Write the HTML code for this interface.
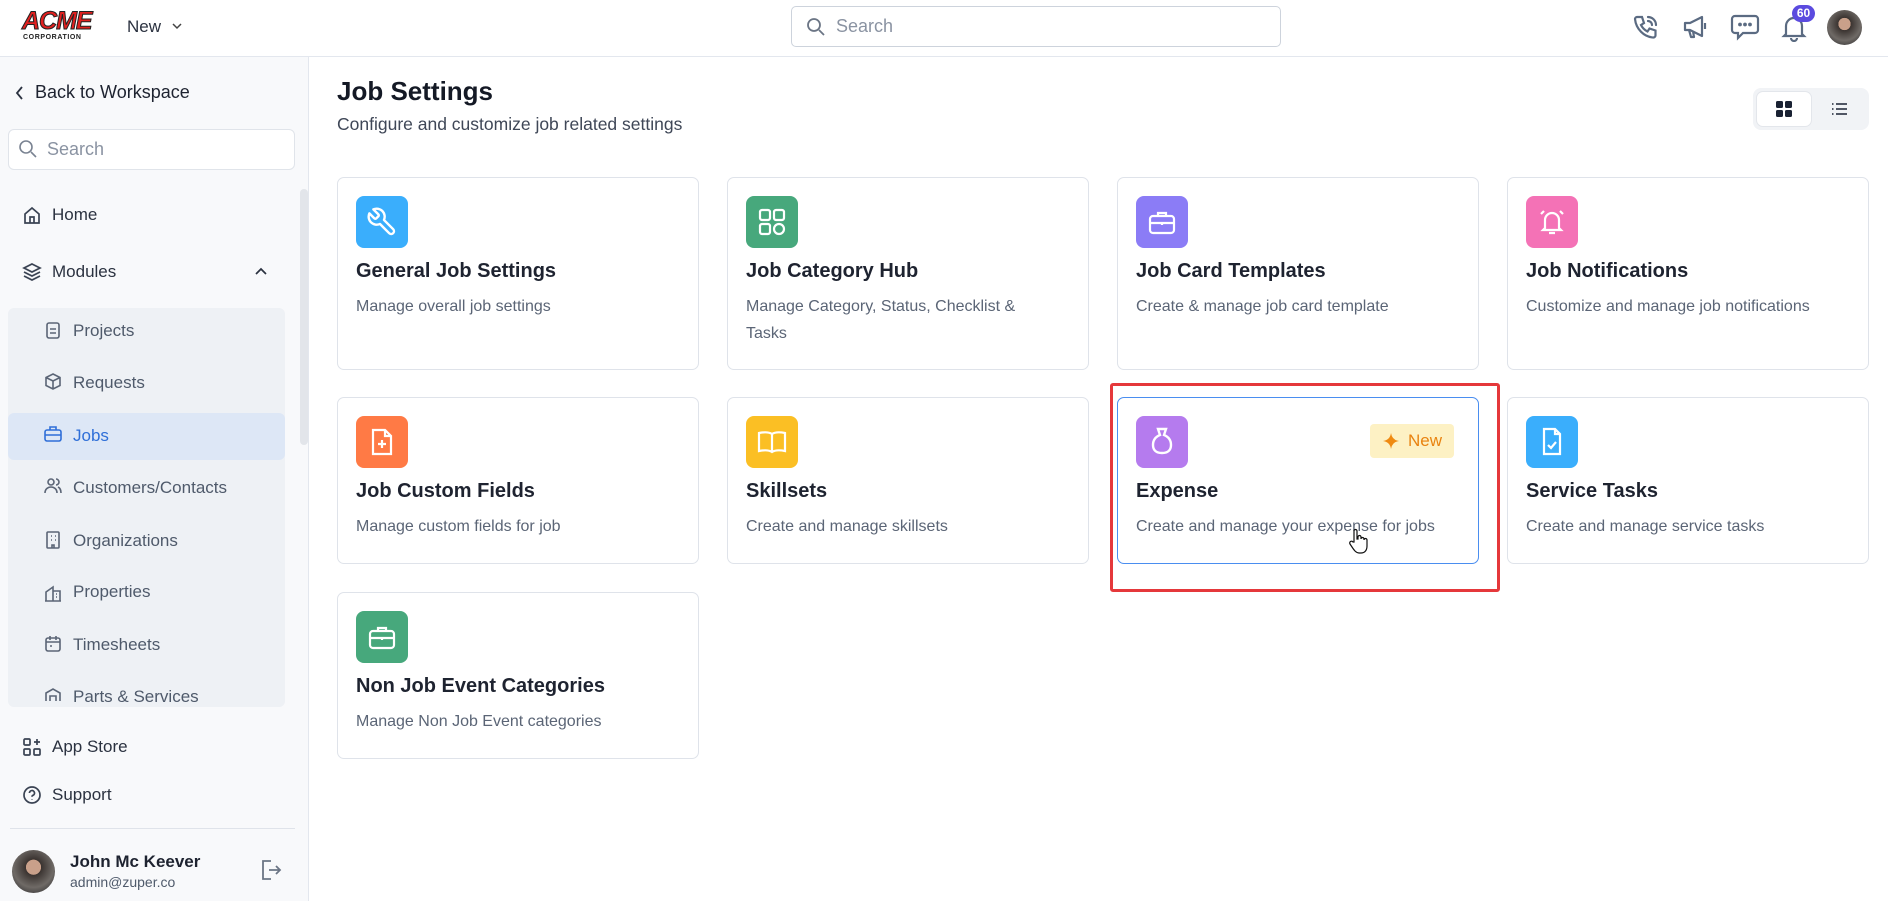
<!DOCTYPE html><html><head><style>
*{box-sizing:border-box;margin:0;padding:0}
body{width:1888px;height:901px;overflow:hidden;background:#fff;font-family:"Liberation Sans",sans-serif;position:relative;color:#1e2330}
.a{position:absolute}
svg{display:block}
.hd{left:0;top:0;width:1888px;height:57px;border-bottom:1px solid #e3e7ee;background:#fff}
.sb{left:0;top:57px;width:309px;height:844px;background:#f8f9fb;border-right:1px solid #e3e7ee}
.nav{position:absolute;left:0;font-size:17px;color:#2b3240;display:flex;align-items:center}
.sub{color:#4f5a6b}
.card{position:absolute;width:362px;border:1px solid #dfe3ea;border-radius:7px;background:#fff}
.ic{position:absolute;left:18px;top:18px;width:52px;height:52px;border-radius:8px;display:flex;align-items:center;justify-content:center}
.ct{position:absolute;left:18px;top:82px;font-size:20px;font-weight:bold;color:#1e2330}
.cd{position:absolute;left:18px;top:115px;width:300px;font-size:16px;color:#5b6576;line-height:27px}
</style></head><body>
<div class="a hd">
 <div class="a" style="left:22px;top:7px;font:900 italic 25px 'Liberation Sans';color:#e0201f;letter-spacing:-1px;-webkit-text-stroke:1px #222">ACME</div>
 <div class="a" style="left:23px;top:34px;font:bold 7px 'Liberation Sans';color:#222;letter-spacing:0.6px">CORPORATION</div>
 <div class="a" style="left:127px;top:17px;font-size:17px;color:#2b3240">New</div>
 <svg class="a" style="left:171px;top:21px" width="12" height="10"><path d="M2 3l4 4 4-4" stroke="#444" stroke-width="1.5" fill="none"/></svg>
 <div class="a" style="left:791px;top:6px;width:490px;height:41px;border:1px solid #cdd3dc;border-radius:5px"></div>
 <svg class="a" style="left:806px;top:17px" width="20" height="20"><circle cx="8" cy="8" r="6" stroke="#6b7585" stroke-width="1.8" fill="none"/><path d="M13 13l5 5" stroke="#6b7585" stroke-width="1.8"/></svg>
 <div class="a" style="left:836px;top:16px;font-size:18px;color:#8a93a2">Search</div>
 <svg class="a" style="left:1632px;top:13px" width="28" height="28" fill="none" stroke="#5b6b82" stroke-width="2.2" stroke-linecap="round"><path d="M5 4h5l2 6-3 2c1.5 3 3.5 5 6.5 6.5l2-3 6 2v5c0 1-1 2-2 2C12 24 4 16 3 6c0-1 1-2 2-2z"/><path d="M16 4a8 8 0 0 1 8 8M16 8a4 4 0 0 1 4 4"/></svg>
 <svg class="a" style="left:1681px;top:13px" width="28" height="28" fill="none" stroke="#5b6b82" stroke-width="2.2" stroke-linejoin="round"><path d="M4 10h5l12-6v19L9 17H4zM8 17l2 7h3l-1-6"/><path d="M24 10v6"/></svg>
 <svg class="a" style="left:1730px;top:13px" width="30" height="28" fill="none" stroke="#5b6b82" stroke-width="2.2"><path d="M5 3h20a3 3 0 0 1 3 3v11a3 3 0 0 1-3 3H13l-5 5v-5H5a3 3 0 0 1-3-3V6a3 3 0 0 1 3-3z"/><circle cx="10" cy="11.5" r=".8" fill="#5b6b82"/><circle cx="15" cy="11.5" r=".8" fill="#5b6b82"/><circle cx="20" cy="11.5" r=".8" fill="#5b6b82"/></svg>
 <svg class="a" style="left:1781px;top:14px" width="26" height="28" fill="none" stroke="#5b6b82" stroke-width="2.2"><path d="M5 20V12a8 8 0 0 1 16 0v8l2 2H3zM10 24a3 3 0 0 0 6 0"/></svg>
 <div class="a" style="left:1792px;top:5px;width:23px;height:17px;border-radius:9px;background:#5b4bdf;color:#fff;font:bold 12px 'Liberation Sans';text-align:center;line-height:17px">60</div>
 <div class="a" style="left:1827px;top:10px;width:35px;height:35px;border-radius:50%;background:radial-gradient(circle at 50% 40%,#c9a08a 0 22%,#3a3330 23%,#6f6a66 60%,#1f1f22 100%)"></div>
</div>
<div class="a sb">
 <svg class="a" style="left:14px;top:28px" width="12" height="16"><path d="M8 2L3 8l5 6" stroke="#2b3240" stroke-width="1.8" fill="none"/></svg>
 <div class="a" style="left:35px;top:25px;font-size:18px;color:#1e2330">Back to Workspace</div>
 <div class="a" style="left:8px;top:72px;width:287px;height:41px;background:#fff;border:1px solid #e0e4ea;border-radius:6px"></div>
 <svg class="a" style="left:18px;top:82px" width="20" height="20"><circle cx="8" cy="8" r="6" stroke="#7a8392" stroke-width="1.6" fill="none"/><path d="M13 13l5 5" stroke="#7a8392" stroke-width="1.6"/></svg>
 <div class="a" style="left:47px;top:82px;font-size:18px;color:#8a93a2">Search</div>
 <div class="a" style="left:300px;top:132px;width:8px;height:256px;background:#e2e5ea;border-radius:4px"></div>
 <div class="a" style="left:8px;top:251px;width:277px;height:399px;background:#eef1f5;border-radius:6px"></div>
 <div class="a" style="left:8px;top:356px;width:277px;height:47px;background:#dde7f6;border-radius:6px"></div>
 <svg class="a" style="left:22px;top:148px" width="20" height="20" fill="none" stroke="#3a4353" stroke-width="1.7"><path d="M3 9l7-6 7 6v9H3zM8 18v-6h4v6"/></svg>
 <div class="nav" style="left:52px;top:148px">Home</div>
 <svg class="a" style="left:22px;top:205px" width="20" height="20" fill="none" stroke="#3a4353" stroke-width="1.7"><path d="M10 2l8 4-8 4-8-4zM2 10l8 4 8-4M2 14l8 4 8-4"/></svg>
 <div class="nav" style="left:52px;top:205px">Modules</div>
 <svg class="a" style="left:254px;top:209px" width="14" height="10"><path d="M2 8l5-5 5 5" stroke="#2b3240" stroke-width="1.7" fill="none"/></svg>
 <div class="nav sub" style="left:73px;top:264px">Projects</div>
 <div class="nav sub" style="left:73px;top:316px">Requests</div>
 <div class="nav" style="left:73px;top:369px;color:#2f6fd8">Jobs</div>
 <div class="nav sub" style="left:73px;top:421px">Customers/Contacts</div>
 <div class="nav sub" style="left:73px;top:474px">Organizations</div>
 <div class="nav sub" style="left:73px;top:525px">Properties</div>
 <div class="nav sub" style="left:73px;top:578px">Timesheets</div>
 <div class="nav sub" style="left:73px;top:630px">Parts &amp; Services</div>
 <svg class="a" style="left:44px;top:264px" width="18" height="380" fill="none" stroke="#5b6576" stroke-width="1.6">
  <rect x="3" y="2" width="12" height="15" rx="2"/><path d="M6 8h6M6 12h6"/>
  <path d="M9 53l7 3.5v8L9 68l-7-3.5v-8zM2 56.5l7 3.5 7-3.5M9 60v8"/>
  <g stroke="#2f6fd8"><rect x="1" y="109" width="16" height="11" rx="2"/><path d="M6 109v-3h6v3M1 114h16"/></g>
  <circle cx="7" cy="161" r="3"/><path d="M1 172c0-4 3-6 6-6s6 2 6 6M12 158a3 3 0 0 1 0 6M14 166c2 1 3 3 3 6"/>
  <rect x="3" y="211" width="12" height="16" rx="1"/><path d="M7 215h1M11 215h1M7 219h1M11 219h1M8 227v-3h2v3"/>
  <path d="M2 280v-9l7-5v14M9 270h7v10M1 280h16M12 273h1M12 276h1"/>
  <rect x="2" y="317" width="14" height="13" rx="2"/><path d="M2 321h14M6 315v4M12 315v4M6 325h2"/>
  <path d="M2 382v-10l7-4 7 4v10M6 382v-7h6v7"/>
 </svg>
 <svg class="a" style="left:22px;top:680px" width="20" height="20" fill="none" stroke="#3a4353" stroke-width="1.7"><rect x="2" y="2" width="6" height="6" rx="1"/><rect x="2" y="12" width="6" height="6" rx="1"/><rect x="12" y="12" width="6" height="6" rx="1"/><path d="M15 2v6M12 5h6"/></svg>
 <div class="nav" style="left:52px;top:680px">App Store</div>
 <svg class="a" style="left:22px;top:728px" width="20" height="20" fill="none" stroke="#3a4353" stroke-width="1.7"><circle cx="10" cy="10" r="8"/><path d="M7.5 8a2.5 2.5 0 1 1 3.5 2.3c-.7.3-1 .8-1 1.5M10 14.5v.5"/></svg>
 <div class="nav" style="left:52px;top:728px">Support</div>
 <div class="a" style="left:10px;top:771px;width:285px;height:1px;background:#dfe3ea"></div>
 <div class="a" style="left:12px;top:793px;width:43px;height:43px;border-radius:50%;background:radial-gradient(circle at 50% 40%,#c9a08a 0 22%,#3a3330 23%,#6f6a66 60%,#1f1f22 100%)"></div>
 <div class="a" style="left:70px;top:795px;font-size:17px;font-weight:bold;color:#1e2330">John Mc Keever</div>
 <div class="a" style="left:70px;top:817px;font-size:14px;color:#4f5a6b">admin@zuper.co</div>
 <svg class="a" style="left:259px;top:801px" width="24" height="24" fill="none" stroke="#6b7585" stroke-width="1.8"><path d="M12 3H4v18h8M10 12h11M17 8l4 4-4 4"/></svg>
</div>
<div class="a" style="left:337px;top:76px;font-size:26px;font-weight:bold;color:#141925">Job Settings</div>
<div class="a" style="left:337px;top:114px;font-size:17.5px;color:#3f4757">Configure and customize job related settings</div>
<div class="a" style="left:1753px;top:88px;width:116px;height:42px;background:#f1f3f6;border-radius:8px"></div>
<div class="a" style="left:1757px;top:92px;width:54px;height:34px;background:#fff;border-radius:6px;box-shadow:0 0 0 1px #e3e6eb"></div>
<svg class="a" style="left:1776px;top:101px" width="16" height="16" fill="#1a2233"><rect x="0" y="0" width="7" height="7" rx="1.5"/><rect x="9" y="0" width="7" height="7" rx="1.5"/><rect x="0" y="9" width="7" height="7" rx="1.5"/><rect x="9" y="9" width="7" height="7" rx="1.5"/></svg>
<svg class="a" style="left:1831px;top:101px" width="16" height="16" stroke="#1a2233" stroke-width="1.6"><path d="M5 3h11M5 8h11M5 13h11M1 3h1.5M1 8h1.5M1 13h1.5"/></svg>

<div class="card" style="left:337px;top:177px;height:193px"><div class="ic" style="background:#3aaefc"><svg width="32" height="32" viewBox="0 0 24 24" fill="none" stroke="#fff" stroke-width="1.8" stroke-linejoin="round" stroke-linecap="round" style="transform:scaleX(-1)"><path d="M14.7 6.3a1 1 0 0 0 0 1.4l1.6 1.6a1 1 0 0 0 1.4 0l3.77-3.77a6 6 0 0 1-7.94 7.94l-6.91 6.91a2.12 2.12 0 0 1-3-3l6.91-6.91a6 6 0 0 1 7.94-7.94l-3.76 3.76z"/></svg></div><div class="ct">General Job Settings</div><div class="cd">Manage overall job settings</div></div>
<div class="card" style="left:727px;top:177px;height:193px"><div class="ic" style="background:#47a87c"><svg width="30" height="30" fill="none" stroke="#fff" stroke-width="2.2"><rect x="3" y="3" width="10" height="10" rx="2"/><rect x="17" y="3" width="10" height="10" rx="2"/><rect x="3" y="17" width="10" height="10" rx="2"/><circle cx="22" cy="22" r="5"/></svg></div><div class="ct">Job Category Hub</div><div class="cd">Manage Category, Status, Checklist &amp; Tasks</div></div>
<div class="card" style="left:1117px;top:177px;height:193px"><div class="ic" style="background:#8b7cf6"><svg width="30" height="30" fill="none" stroke="#fff" stroke-width="2.2"><rect x="3" y="9" width="24" height="17" rx="3"/><path d="M11 9V6h8v3M3 16h24M15 15v3"/></svg></div><div class="ct">Job Card Templates</div><div class="cd">Create &amp; manage job card template</div></div>
<div class="card" style="left:1507px;top:177px;height:193px"><div class="ic" style="background:#f472b6"><svg width="32" height="32" fill="none" stroke="#fff" stroke-width="2.2"><path d="M9 22v-8a7 7 0 0 1 14 0v8l2 2H7zM13 27h6M5 8l3-3M27 8l-3-3"/></svg></div><div class="ct">Job Notifications</div><div class="cd">Customize and manage job notifications</div></div>

<div class="card" style="left:337px;top:397px;height:167px"><div class="ic" style="background:#ff7a45"><svg width="30" height="30" fill="none" stroke="#fff" stroke-width="2.2"><path d="M6 3h12l6 6v18H6zM18 3v6h6M15 13v8M11 17h8"/></svg></div><div class="ct">Job Custom Fields</div><div class="cd">Manage custom fields for job</div></div>
<div class="card" style="left:727px;top:397px;height:167px"><div class="ic" style="background:#fbbf24"><svg width="32" height="30" fill="none" stroke="#fff" stroke-width="2.2"><path d="M16 7c-3-2-8-2-13-1v18c5-1 10-1 13 1 3-2 8-2 13-1V6c-5-1-10-1-13 1zM16 7v18"/></svg></div><div class="ct">Skillsets</div><div class="cd">Create and manage skillsets</div></div>
<div class="card" style="left:1117px;top:397px;height:167px;border-color:#4a8ef0"><div class="ic" style="background:#b57bee"><svg width="30" height="32" fill="none" stroke="#fff" stroke-width="2.4"><path d="M11 3h8l-2 6c5 2 7 6 7 10 0 5-3 8-9 8s-9-3-9-8c0-4 2-8 7-10z"/></svg></div><div class="ct">Expense</div><div class="cd" style="width:340px">Create and manage your expense for jobs</div>
 <div class="a" style="left:252px;top:26px;width:84px;height:34px;background:#fdf1c4;border-radius:4px;color:#e98310;font-size:17px;line-height:34px;padding-left:38px">New</div>
 <svg class="a" style="left:265px;top:35px" width="16" height="16"><path d="M8 0Q9 7 16 8Q9 9 8 16Q7 9 0 8Q7 7 8 0z" fill="#ef8a12"/></svg>
 <svg class="a" style="left:230px;top:130px" width="20" height="26"><path d="M6 14V3a1.5 1.5 0 0 1 3 0v8h1V9a1.5 1.5 0 0 1 3 0v2a1.5 1.5 0 0 1 3 0v1a1.5 1.5 0 0 1 3 0v6c0 4-2 7-6 7h-2c-3 0-5-3-7-6l-2-3a1.5 1.5 0 0 1 3-2z" fill="#fff" stroke="#111" stroke-width="1.2"/></svg>
</div>
<div class="card" style="left:1507px;top:397px;height:167px"><div class="ic" style="background:#3aaefc"><svg width="30" height="32" fill="none" stroke="#fff" stroke-width="2.2"><path d="M7 3h11l5 5v20H7zM18 3v5h5M11 19l3 3 5-6"/></svg></div><div class="ct">Service Tasks</div><div class="cd">Create and manage service tasks</div></div>
<div class="card" style="left:337px;top:592px;height:167px"><div class="ic" style="background:#47a87c"><svg width="30" height="30" fill="none" stroke="#fff" stroke-width="2.2"><rect x="3" y="9" width="24" height="17" rx="3"/><path d="M11 9V6h8v3M3 16h24M15 15v3"/></svg></div><div class="ct">Non Job Event Categories</div><div class="cd">Manage Non Job Event categories</div></div>
<div class="a" style="left:1110px;top:383px;width:390px;height:209px;border:3px solid #e5383b;border-radius:3px"></div>
</body></html>
